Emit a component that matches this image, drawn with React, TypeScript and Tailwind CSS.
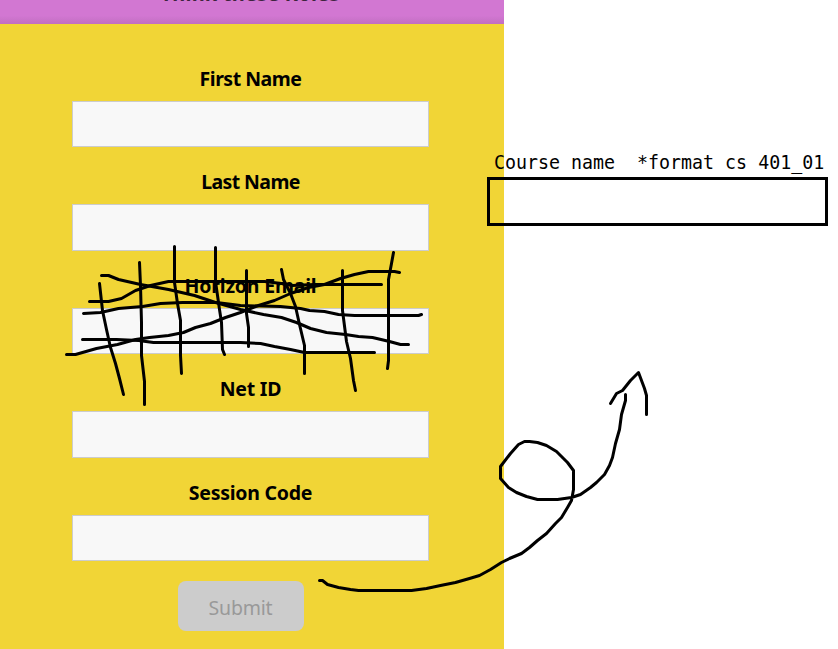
import React from "react";

type Field = { label: string; labelClass: string; labelBox: string; inputClass: string };

const fields: Field[] = [
  { label: "First Name", labelClass: "tracking-[-0.5px]", labelBox: "h-[44px]", inputClass: "h-[46px]" },
  { label: "Last Name", labelClass: "tracking-[-0.6px]", labelBox: "h-[57px]", inputClass: "h-[47px]" },
  { label: "Horizon Email", labelClass: "tracking-[-0.2px]", labelBox: "h-[57px]", inputClass: "h-[46px]" },
  { label: "Net ID", labelClass: "tracking-[-0.2px]", labelBox: "h-[57px]", inputClass: "h-[47px]" },
  { label: "Session Code", labelClass: "tracking-[-0.25px]", labelBox: "h-[57px]", inputClass: "h-[46px]" },
];

// Freehand pen strokes: the crossed-out email field, then the arrow.
const strokes = [
  "M101 275H108L118 279L140 284L168 289L194 295L215 302L240 309L263 314L281 317L296 322L310 328L326 332L345 334L358 336L372 337L389 341L400 344H408",
  "M89 301H108L121 298L135 290L150 285L168 281H264L281 283L292 285L314 284H381",
  "M83 313L100 312L118 308L142 306L160 303L182 302H216L240 305L280 306L300 308L309 310L324 311L338 314L354 315H418L421 314",
  "M66 354H75L96 348L117 344L135 339L149 337L168 335L183 332L195 327L210 323L225 317L240 312L258 305L274 300L290 293L308 287L324 284L340 278L354 274L368 271H394L399 272",
  "M82 339H116L138 340L153 342H240L260 343L274 346L290 349L304 352H374",
  "M99 283L102 310L106 329L110 347L115 363L119 378L122 390L123 394",
  "M139 262L140 285L141 322L141 355L144 381V404",
  "M174 246V282L177 303L180 320L180 355L181 373",
  "M215 247V281L219 309L221 322L222 349L224 354",
  "M246 270V313L248 327V346",
  "M281 269L283 279L290 293L295 306L299 324L304 345V373",
  "M342 270V310L346 341L350 358L353 380L355 390",
  "M393 252L391 263L388 279V360L387 368",
  "M319 580H322L327 584L338 587L350 589L358 590H411L426 588L440 585L455 582L469 578L479 575L490 569L501 562L509 558L521 553L529 547L537 540L546 533L555 523L561 517L567 507L571 500L573 489V470L567 462L556 451L546 445L537 442L529 441H524L518 444L510 453L500 466V478L508 487L516 492L526 496L537 499H557L571 497L580 494L590 487L596 482L604 474L609 465L612 457L615 443L619 429L621 414L625 400V394",
  "M610 403L616 393L622 390L630 380L638 372L644 388L646 395V414",
];

export default function App() {
  return (
    <main className="relative h-[649px] w-[838px] overflow-hidden bg-white text-black">
      <section className="flex h-full w-[504px] flex-col bg-[#f1d536] font-['Noto_Sans','Open_Sans',sans-serif]">
        <header className="flex h-6 shrink-0 items-end justify-center bg-linear-to-b from-[#d277d2] from-65% to-[#c26fc2]">
          <h1 className="mr-1 mb-[16px] text-[20px] leading-7 font-bold tracking-[0.2px] whitespace-nowrap text-[#3e233e]">Think these Roles</h1>
        </header>
        <form className="ml-[72px] flex w-[357px] flex-col pt-[33px]">
          {fields.map((f) => (
            <label key={f.label} className="flex flex-col">
              <span className={`flex items-end justify-center pb-2 text-[19.5px] leading-7 font-bold ${f.labelBox} ${f.labelClass}`}>
                {f.label}
              </span>
              <input className={`w-full border border-[#ccc] bg-[#f8f8f8] outline-none ${f.inputClass}`} />
            </label>
          ))}
          <button type="button" className="mt-5 ml-[105.5px] h-[50px] w-[126px] rounded-lg bg-[#ccc] pt-1 text-[19.5px] tracking-[-0.2px] text-[#999]">
            Submit
          </button>
        </form>
      </section>

      <div className="absolute top-[149px] left-[487px] w-[341px]">
        <p className="ml-[7px] h-[28px] w-[380px] origin-left scale-x-[0.914] font-['DejaVu_Sans_Mono',monospace] text-[20px] leading-[26px] whitespace-pre">
          {"Course name  *format cs 401_01"}
        </p>
        <div className="h-[49px] border-3 border-black" />
      </div>

      <svg className="pointer-events-none absolute inset-0" width="838" height="649" fill="none" stroke="#000" strokeWidth="3" strokeLinecap="round" strokeLinejoin="round">
        <g transform="translate(0.5 0.5)">
          {strokes.map((d) => (
            <path key={d} d={d} />
          ))}
        </g>
      </svg>
    </main>
  );
}
